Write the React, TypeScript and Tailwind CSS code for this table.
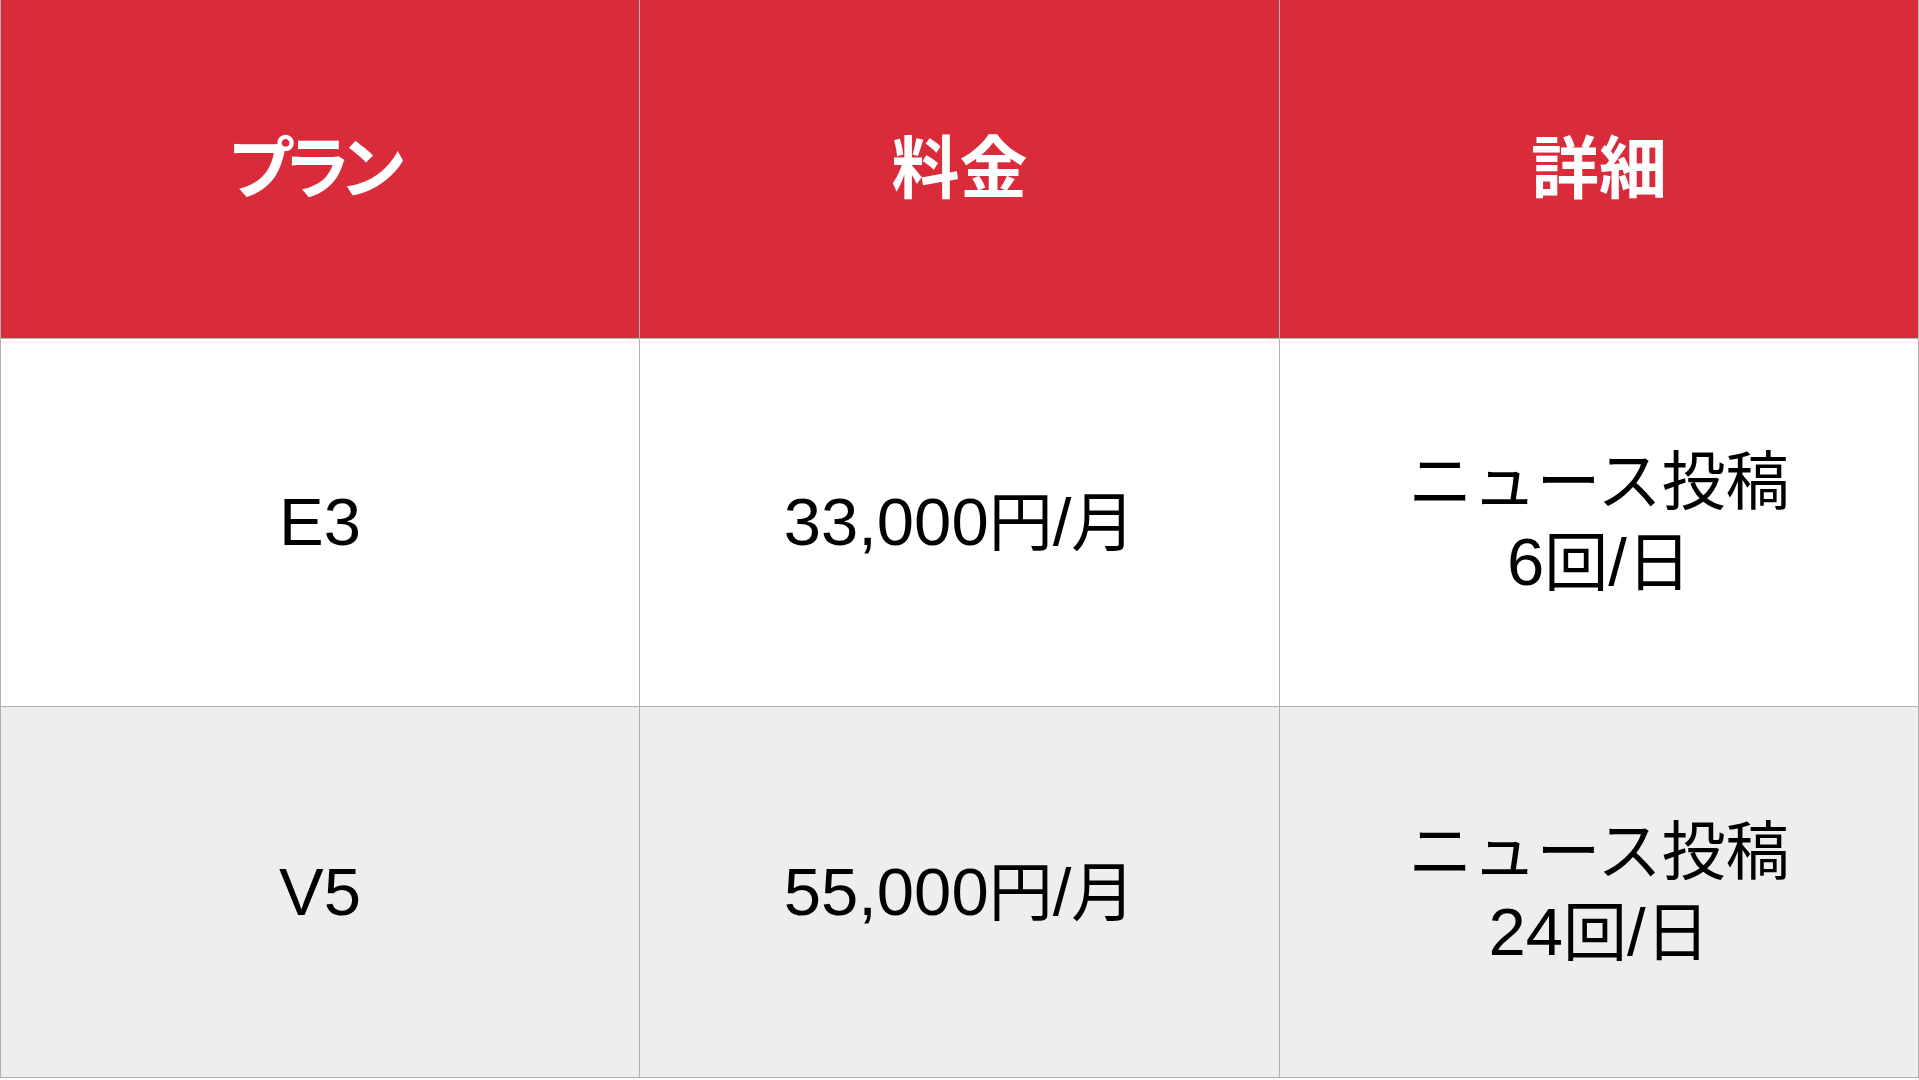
import React from "react";

const rows = [
  { plan: "E3", price: "33,000円/月", detail: ["ニュース投稿", "6回/日"], bg: "bg-white" },
  { plan: "V5", price: "55,000円/月", detail: ["ニュース投稿", "24回/日"], bg: "bg-[#eeeeee]" },
];

function Mixed({ text }: { text: string }) {
  const parts = text.match(/[\x00-\x7F]+|[^\x00-\x7F]+/g) || [];
  return (
    <span>
      {parts.map((p, i) =>
        /^[\x00-\x7F]+$/.test(p) ? (
          <span key={i} className="text-[67px]">
            {p}
          </span>
        ) : (
          <span key={i} className="text-[64px]">
            {p}
          </span>
        )
      )}
    </span>
  );
}

const headers = [
  { t: "プラン", cls: "tracking-[-12px] pr-[18px]" },
  { t: "料金", cls: "" },
  { t: "詳細", cls: "" },
];

export default function App() {
  const font = { fontFamily: '"Liberation Sans", "Noto Sans CJK JP", sans-serif' };
  return (
    <div className="w-[1919px] h-[1080px] bg-white" style={font}>
      <div className="w-[1918px] h-[1078px] grid grid-cols-[639px_640px_639px] grid-rows-[339px_368px_371px] border-l border-[#b0b0b0]">
        {headers.map((h) => (
          <div
            key={h.t}
            className="bg-[#d92b3a] border-r border-b border-[#b8b8b8] flex items-center justify-center text-white font-bold text-[68px] leading-none"
          >
            <span className={h.cls}>{h.t}</span>
          </div>
        ))}
        {rows.map((r) => (
          <React.Fragment key={r.plan}>
            <div className={`${r.bg} border-r border-b border-[#b0b0b0] flex items-center justify-center text-black text-[64px] leading-[80px]`}>
              <Mixed text={r.plan} />
            </div>
            <div className={`${r.bg} border-r border-b border-[#b0b0b0] flex items-center justify-center text-black text-[64px] leading-[80px]`}>
              <Mixed text={r.price} />
            </div>
            <div className={`${r.bg} border-r border-b border-[#b0b0b0] flex flex-col items-center justify-center text-black text-[64px] leading-[80px]`}>
              {r.detail.map((d) => (
                <div key={d}>
                  <Mixed text={d} />
                </div>
              ))}
            </div>
          </React.Fragment>
        ))}
      </div>
    </div>
  );
}
